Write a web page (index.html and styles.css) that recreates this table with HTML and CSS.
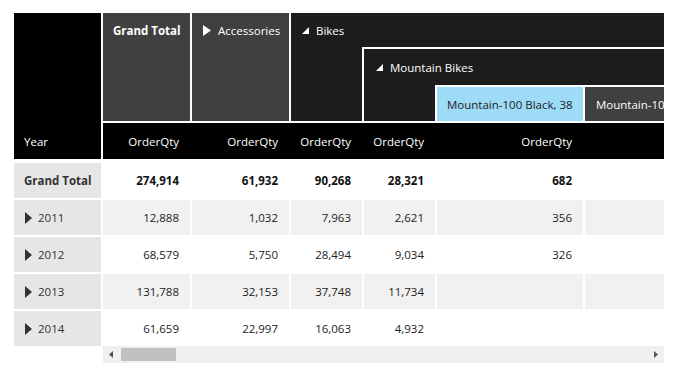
FILE: index.html
```html
<!DOCTYPE html>
<html>
<head>
<meta charset="utf-8">
<link rel="stylesheet" href="styles.css">
</head>
<body>
<div class="pivot">
  <div class="frozen">
    <div class="corner"><span class="corner-label">Year</span></div>
    <div class="rowhead total">Grand Total</div>
    <div class="rowhead"><svg class="tri-r" width="7" height="12" viewBox="0 0 7 12"><path d="M0 0L7 6L0 12Z"/></svg>2011</div>
    <div class="rowhead"><svg class="tri-r" width="7" height="12" viewBox="0 0 7 12"><path d="M0 0L7 6L0 12Z"/></svg>2012</div>
    <div class="rowhead"><svg class="tri-r" width="7" height="12" viewBox="0 0 7 12"><path d="M0 0L7 6L0 12Z"/></svg>2013</div>
    <div class="rowhead"><svg class="tri-r" width="7" height="12" viewBox="0 0 7 12"><path d="M0 0L7 6L0 12Z"/></svg>2014</div>
  </div>
  <div class="scroller">
    <div class="viewport">
      <div class="grid head">
        <div class="hcell gt">Grand Total</div>
        <div class="hcell acc"><svg class="tri-h" width="8" height="11" viewBox="0 0 8 11"><path d="M0 0L8 5.5L0 11Z"/></svg>Accessories</div>
        <div class="hcell bikes"><svg class="tri-e" width="7" height="7" viewBox="0 0 7 7"><path d="M7 0L7 7L0 7Z"/></svg>Bikes</div>
        <div class="hcell mtb"><svg class="tri-e" width="7" height="7" viewBox="0 0 7 7"><path d="M7 0L7 7L0 7Z"/></svg>Mountain Bikes</div>
        <div class="hcell leaf sel">Mountain-100 Black, 38</div>
        <div class="hcell leaf next">Mountain-100 Black, 42</div>
        <div class="band"></div>
        <div class="mcell c1">OrderQty</div>
        <div class="mcell c2">OrderQty</div>
        <div class="mcell c3">OrderQty</div>
        <div class="mcell c4">OrderQty</div>
        <div class="mcell c5">OrderQty</div>
        <div class="mcell c6"></div>
      </div>
      <div class="grid body">
        <div class="dcell b">274,914</div><div class="dcell b">61,932</div><div class="dcell b">90,268</div><div class="dcell b">28,321</div><div class="dcell b">682</div><div class="dcell b"></div>
        <div class="dcell alt">12,888</div><div class="dcell alt">1,032</div><div class="dcell alt">7,963</div><div class="dcell alt">2,621</div><div class="dcell alt">356</div><div class="dcell alt"></div>
        <div class="dcell">68,579</div><div class="dcell">5,750</div><div class="dcell">28,494</div><div class="dcell">9,034</div><div class="dcell">326</div><div class="dcell"></div>
        <div class="dcell alt">131,788</div><div class="dcell alt">32,153</div><div class="dcell alt">37,748</div><div class="dcell alt">11,734</div><div class="dcell alt"></div><div class="dcell alt"></div>
        <div class="dcell">61,659</div><div class="dcell">22,997</div><div class="dcell">16,063</div><div class="dcell">4,932</div><div class="dcell"></div><div class="dcell"></div>
      </div>
    </div>
    <div class="hscroll">
      <svg class="arrow" width="4" height="7" viewBox="0 0 4 7"><path d="M4 0L0 3.5L4 7Z"/></svg>
      <div class="thumb"></div>
      <div class="track"></div>
      <svg class="arrow" width="4" height="7" viewBox="0 0 4 7"><path d="M0 0L4 3.5L0 7Z"/></svg>
    </div>
  </div>
</div>
</body>
</html>
```
FILE: styles.css
```css
* { box-sizing: border-box; }
html, body { margin: 0; padding: 0; background: #fff; }
body {
  font-family: "Open Sans", "Noto Sans", sans-serif;
  font-size: 11.5px;
  color: #222;
}
.pivot {
  display: flex;
  gap: 2px;
  padding: 13px 0 0 14px;
}
.frozen {
  width: 87px;
  display: flex;
  flex-direction: column;
  gap: 2px;
}
.corner {
  height: 146px;
  background: #000;
  color: #fff;
  display: flex;
  align-items: flex-end;
  margin-bottom: 2px;
}
.corner-label {
  height: 36px;
  line-height: 37px;
  padding-left: 10px;
}
.rowhead {
  height: 35px;
  background: #e6e6e6;
  display: flex;
  align-items: center;
  padding-left: 11px;
  color: #333;
}
.rowhead.total { font-weight: bold; padding-left: 10px; }
.tri-r { fill: #333; margin-right: 6px; flex: none; }
.scroller {
  width: 561px;
  display: flex;
  flex-direction: column;
}
.viewport {
  width: 561px;
  overflow: hidden;
  display: flex;
  flex-direction: column;
  gap: 4px;
}
.grid {
  display: grid;
  grid-template-columns: 87px 97px 71px 71px 146px 180px;
  column-gap: 2px;
  row-gap: 2px;
}
.head { grid-template-rows: 34px 36px 34px 36px; }
.body { grid-auto-rows: 35px; }
.hcell {
  color: #fff;
  display: flex;
  align-items: center;
  align-self: stretch;
  white-space: nowrap;
}
.gt, .acc {
  grid-row: 1 / 4;
  background: #404040;
  align-items: flex-start;
  line-height: 35px;
  padding-left: 10px;
}
.gt { grid-column: 1; font-weight: bold; }
.acc { grid-column: 2; padding-left: 11px; }
.tri-h { fill: #fff; margin: 12px 7px 0 0; flex: none; }
.bikes {
  grid-column: 3 / 7;
  grid-row: 1 / 4;
  background: #1c1c1c;
  align-items: flex-start;
  line-height: 35px;
  padding-left: 11px;
}
.tri-e { fill: #fff; margin: 14px 7px 0 0; flex: none; }
.mtb {
  grid-column: 4 / 7;
  grid-row: 2 / 4;
  background: #1c1c1c;
  align-items: flex-start;
  line-height: 37px;
  padding-left: 12px;
  box-shadow: -2px 0 0 #fff, 0 -2px 0 #fff, -2px -2px 0 #fff;
}
.mtb .tri-e { margin-top: 15px; }
.leaf {
  grid-row: 3;
  box-shadow: -2px 0 0 #fff, 0 -2px 0 #fff, -2px -2px 0 #fff;
  padding-left: 10px;
  overflow: hidden;
}
.sel { grid-column: 5; background: #9ddbf7; color: #222; }
.next { grid-column: 6; background: #404040; padding-left: 11px; }
.band {
  grid-column: 1 / 7;
  grid-row: 4;
  background: #000;
}
.mcell {
  grid-row: 4;
  color: #fff;
  display: flex;
  align-items: center;
  justify-content: flex-end;
  padding-right: 11px;
}
.c1 { grid-column: 1; }
.c2 { grid-column: 2; }
.c3 { grid-column: 3; }
.c4 { grid-column: 4; }
.c5 { grid-column: 5; }
.c6 { grid-column: 6; }
.dcell {
  display: flex;
  align-items: center;
  justify-content: flex-end;
  padding-right: 11px;
  color: #222;
}
.dcell.b { font-weight: bold; color: #111; }
.dcell.alt { background: #f1f1f1; }
.hscroll {
  height: 17px;
  background: #f0f0f0;
  display: flex;
  align-items: center;
  padding: 0 6px 0 6px;
}
.arrow { fill: #555; flex: none; }
.thumb {
  width: 55px;
  height: 13px;
  background: #c1c1c1;
  margin-left: 8px;
}
.track { flex: 1; }
```
